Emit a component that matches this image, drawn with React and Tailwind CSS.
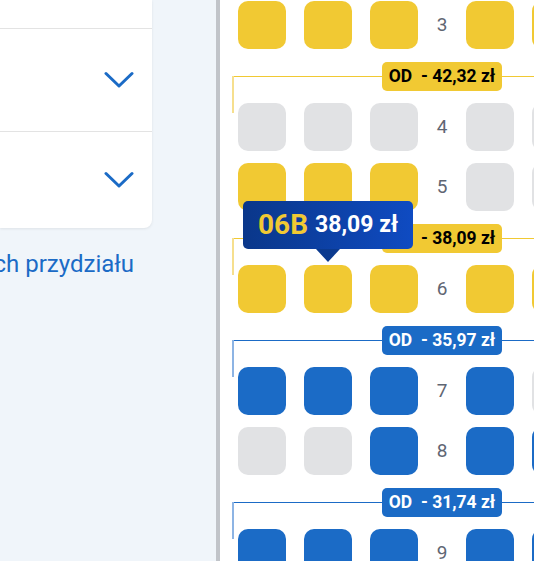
import React from "react";

// kolory miejsc
const SEAT = {
  y: "bg-[#f1c933]",
  g: "bg-[#e1e2e4]",
  b: "bg-[#1b6bc6]",
};

const rows = [
  { num: 3, seats: ["y", "y", "y", "y", "y"] },
  { section: { price: "42,32", tone: "y" } },
  { num: 4, seats: ["g", "g", "g", "g", "g"] },
  { num: 5, seats: ["y", "y", "y", "g", "g"] },
  { section: { price: "38,09", tone: "y" } },
  { num: 6, seats: ["y", "y", "y", "y", "y"], tip: 1 },
  { section: { price: "35,97", tone: "b" } },
  { num: 7, seats: ["b", "b", "b", "b", "g"] },
  { num: 8, seats: ["g", "g", "b", "b", "b"] },
  { section: { price: "31,74", tone: "b" } },
  { num: 9, seats: ["b", "b", "b", "b", "b"] },
];

const Chevron = () => (
  <svg width="30" height="18" viewBox="0 0 30 18" fill="none">
    <path d="M2 2.5 L15 15 L28 2.5" stroke="#1b6bc6" strokeWidth="3" strokeLinecap="round" strokeLinejoin="round" />
  </svg>
);

const Tooltip = () => (
  <div className="absolute left-1/2 -translate-x-1/2 bottom-full mb-[3px] z-10 flex flex-col items-center">
    <div className="h-[48px] w-[170px] rounded-[5px] bg-gradient-to-r from-[#0a378a] to-[#0f4bc2] flex items-center justify-center gap-[7px] whitespace-nowrap">
      <span className="text-[28px] font-bold text-[#f1c933]">06B</span>
      <span className="text-[23px] font-bold text-white">38,09 zł</span>
    </div>
    <div className="w-0 h-0 border-l-[12px] border-r-[12px] border-t-[13px] border-l-transparent border-r-transparent border-t-[#0b3a8f]" />
  </div>
);

const SeatRow = ({ num, seats, tip }) => (
  <div className="flex gap-[18px] pl-[18px] h-[48px]">
    {seats.slice(0, 3).map((s, i) => (
      <div key={i} className={`relative w-[48px] h-[48px] flex-none rounded-[10px] ${SEAT[s]}`}>
        {tip === i && <Tooltip />}
      </div>
    ))}
    <div className="w-[12px] flex-none flex items-center justify-center text-[19px] text-[#5f6673]">{num}</div>
    {seats.slice(3).map((s, i) => (
      <div key={i} className={`w-[48px] h-[48px] flex-none rounded-[10px] ${SEAT[s]}`} />
    ))}
  </div>
);

const SectionHeader = ({ price, tone }) => {
  const yellow = tone === "y";
  return (
    <div className="relative h-[54px] flex items-center pl-[13px]">
      <div className={`absolute left-[12px] top-[27px] w-[2px] h-[37px] ${yellow ? "bg-[#f6df8e]" : "bg-[#8db4e4]"}`} />
      <div className={`w-[149px] h-px flex-none ${yellow ? "bg-[#f1c933]" : "bg-[#1b6bc6]"}`} />
      <div
        className={`h-[29px] w-[120px] flex-none rounded-[5px] flex items-center justify-center whitespace-pre text-[17.5px] font-bold ${
          yellow ? "bg-[#f1c933] text-black" : "bg-[#1b6bc6] text-white"
        }`}
      >
        {`OD  - ${price} zł`}
      </div>
      <div className={`flex-1 h-px ${yellow ? "bg-[#f1c933]" : "bg-[#1b6bc6]"}`} />
    </div>
  );
};

export default function App() {
  return (
    <div className="flex h-[561px] w-[534px] overflow-hidden font-['Roboto',sans-serif]">
      {/* lewy panel */}
      <div className="w-[216px] flex-none bg-[#f0f5fa]">
        <div className="w-[152px] bg-white rounded-br-[8px] shadow-[0_1px_3px_rgba(0,0,0,0.08)]">
          <div className="h-[28px]" />
          <div className="h-[103px] border-t border-[#e3e3e3] flex items-center justify-end pr-[18px]">
            <Chevron />
          </div>
          <div className="h-[97px] border-t border-[#e3e3e3] flex items-center justify-end pr-[18px]">
            <Chevron />
          </div>
        </div>
        <div className="mt-[21px] w-[134px] flex justify-end overflow-hidden whitespace-nowrap text-[24px] leading-[30px] text-[#1b6bc6]">
          Zasady automatycznych przydziału
        </div>
      </div>

      <div className="w-[4px] flex-none bg-[#c1c4c9]" />

      {/* mapa miejsc */}
      <div className="flex-1 bg-white overflow-hidden pt-px">
        {rows.map((r, i) =>
          r.section ? (
            <SectionHeader key={i} {...r.section} />
          ) : (
            <div key={i}>
              <SeatRow {...r} />
              {rows[i + 1] && !rows[i + 1].section && <div className="h-[12px]" />}
            </div>
          )
        )}
      </div>
    </div>
  );
}
